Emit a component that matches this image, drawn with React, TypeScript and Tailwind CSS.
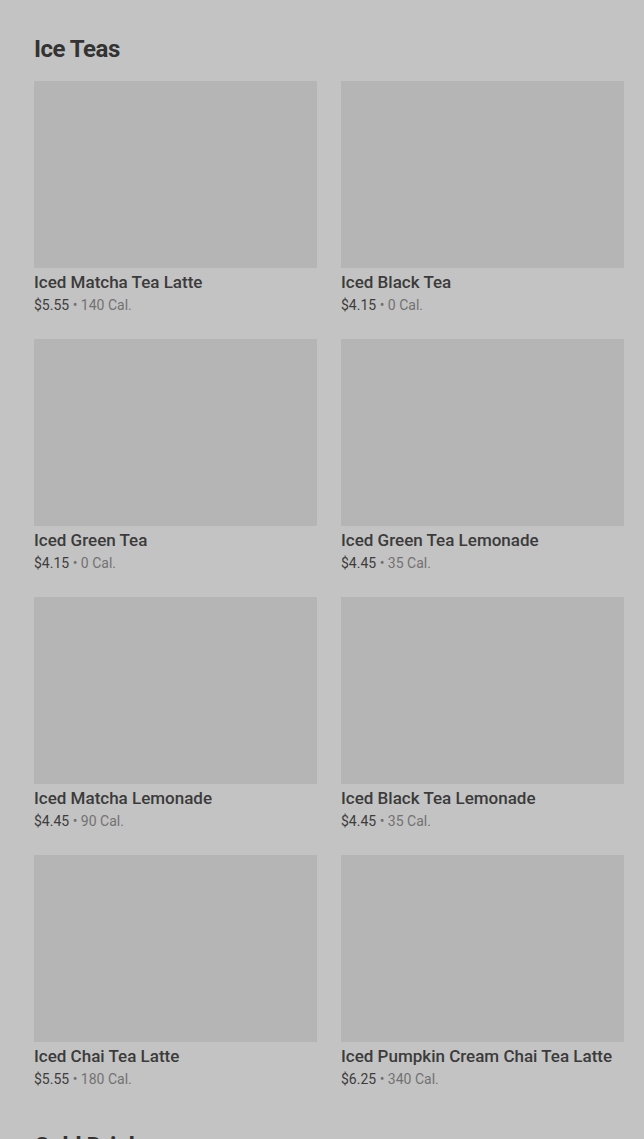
import React from 'react';

interface Item {
  name: string;
  price: string;
  cal: string;
}

const iceTeas: Item[] = [
  { name: 'Iced Matcha Tea Latte', price: '$5.55', cal: '140 Cal.' },
  { name: 'Iced Black Tea', price: '$4.15', cal: '0 Cal.' },
  { name: 'Iced Green Tea', price: '$4.15', cal: '0 Cal.' },
  { name: 'Iced Green Tea Lemonade', price: '$4.45', cal: '35 Cal.' },
  { name: 'Iced Matcha Lemonade', price: '$4.45', cal: '90 Cal.' },
  { name: 'Iced Black Tea Lemonade', price: '$4.45', cal: '35 Cal.' },
  { name: 'Iced Chai Tea Latte', price: '$5.55', cal: '180 Cal.' },
  { name: 'Iced Pumpkin Cream Chai Tea Latte', price: '$6.25', cal: '340 Cal.' },
];

const ItemCard: React.FC<{ item: Item }> = ({ item }) => (
  <div className="flex flex-col">
    <div className="h-[187px] w-full bg-[#b5b5b5]" />
    <div className="mt-[4px] text-[17px] leading-[20px] font-medium text-[#3b3b3b] whitespace-nowrap">
      {item.name}
    </div>
    <div className="mt-[3px] text-[14px] leading-[20px] whitespace-nowrap">
      <span className="text-[#3d3d3d]">{item.price}</span>
      <span className="text-[#727272]"> • {item.cal}</span>
    </div>
  </div>
);

export default function App() {
  return (
    <div className="h-[1139px] bg-[#c3c3c3] pl-[34px] pr-[20px] pt-[33px] font-['Roboto',_'Liberation_Sans',_sans-serif] overflow-hidden">
      <section>
        <h2 className="text-[24px] leading-[32px] font-bold tracking-[-0.5px] text-[#333333] mb-4">Ice Teas</h2>
        <div className="grid grid-cols-2 gap-x-[24px] gap-y-[24px]">
          {iceTeas.map((item) => (
            <ItemCard key={item.name} item={item} />
          ))}
        </div>
      </section>
      <section className="mt-[41px]">
        <h2 className="text-[24px] leading-[32px] font-bold tracking-[-0.5px] text-[#333333] mb-4">Cold Drinks</h2>
      </section>
    </div>
  );
}
